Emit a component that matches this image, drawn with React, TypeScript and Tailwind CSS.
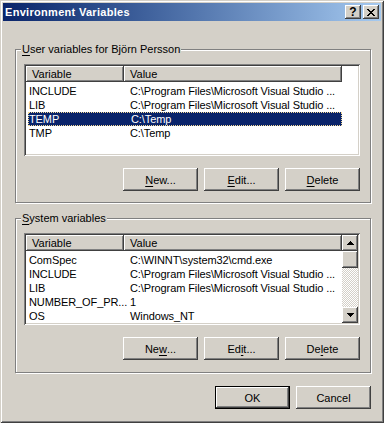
import React from 'react';

const raised =
  'shadow-[inset_-1px_-1px_#404040,inset_1px_1px_#ffffff,inset_-2px_-2px_#808080,inset_2px_2px_#d4d0c8]';
const headerCell =
  'h-full flex items-center shadow-[inset_-1px_-1px_#404040,inset_1px_1px_#ffffff,inset_-2px_-2px_#808080]';

type Row = { name: string; value: string; selected?: boolean };

const userVars: Row[] = [
  { name: 'INCLUDE', value: 'C:\\Program Files\\Microsoft Visual Studio ...' },
  { name: 'LIB', value: 'C:\\Program Files\\Microsoft Visual Studio ...' },
  { name: 'TEMP', value: 'C:\\Temp', selected: true },
  { name: 'TMP', value: 'C:\\Temp' },
];

const systemVars: Row[] = [
  { name: 'ComSpec', value: 'C:\\WINNT\\system32\\cmd.exe' },
  { name: 'INCLUDE', value: 'C:\\Program Files\\Microsoft Visual Studio ...' },
  { name: 'LIB', value: 'C:\\Program Files\\Microsoft Visual Studio ...' },
  { name: 'NUMBER_OF_PR...', value: '1' },
  { name: 'OS', value: 'Windows_NT' },
];

function Key({ children }: { children: React.ReactNode }) {
  return <span className="underline underline-offset-[2px]">{children}</span>;
}

function Button({ children, isDefault }: { children: React.ReactNode; isDefault?: boolean }) {
  return (
    <div className={`w-[75px] h-[23px] ${isDefault ? 'border border-black' : ''}`}>
      <div className={`w-full h-full flex items-center justify-center ${raised}`}>{children}</div>
    </div>
  );
}

function ListHeader() {
  return (
    <div className="h-[16px] flex bg-[#d4d0c8]">
      <div className={`w-[98px] pl-[6px] ${headerCell}`}>Variable</div>
      <div className={`w-[218px] pl-[6px] ${headerCell}`}>Value</div>
    </div>
  );
}

function ListRows({ rows }: { rows: Row[] }) {
  return (
    <div className="pt-[2px] tracking-[-0.1px]">
      {rows.map((r) => (
        <div
          key={r.name}
          className={`ml-[2px] w-[314px] h-[14px] flex items-center ${
            r.selected ? 'bg-[#0a246a] text-white border border-dotted border-[#f5db95]' : ''
          }`}
        >
          <div className={`w-[96px] whitespace-nowrap ${r.selected ? 'pl-0' : 'pl-[1px]'}`}>{r.name}</div>
          <div className="pl-[6px] whitespace-nowrap">{r.value}</div>
        </div>
      ))}
    </div>
  );
}

function Arrow({ up }: { up?: boolean }) {
  return (
    <svg width="7" height="4" viewBox="0 0 7 4" shapeRendering="crispEdges">
      <polygon points={up ? '3.5,0 7,4 0,4' : '0,0 7,0 3.5,4'} fill="#000" />
    </svg>
  );
}

function Scrollbar() {
  return (
    <div className="w-[16px] h-full flex flex-col">
      <div className={`h-[16px] flex items-center justify-center bg-[#d4d0c8] ${raised}`}>
        <Arrow up />
      </div>
      <div className={`h-[17px] bg-[#d4d0c8] ${raised}`} />
      <div className="flex-1 bg-[repeating-conic-gradient(#d4d0c8_0_25%,#ffffff_0_50%)] bg-size-[2px_2px]" />
      <div className={`h-[16px] flex items-center justify-center bg-[#d4d0c8] ${raised}`}>
        <Arrow />
      </div>
    </div>
  );
}

function GroupBox({
  label,
  height,
  children,
}: {
  label: React.ReactNode;
  height: string;
  children: React.ReactNode;
}) {
  return (
    <div
      className={`relative w-[356px] ${height} border border-[#808080] shadow-[inset_1px_1px_#ffffff,1px_1px_#ffffff] pl-[8px] pt-[14px] pr-[10px] flex flex-col`}
    >
      <span className="absolute left-[5px] -top-[8px] px-[1px] bg-[#d4d0c8] leading-[14px] whitespace-nowrap">
        {label}
      </span>
      {children}
    </div>
  );
}

function ButtonRow({ keys }: { keys: [React.ReactNode, React.ReactNode, React.ReactNode] }) {
  return (
    <div className="mt-[12px] flex justify-end gap-[6px]">
      <Button>{keys[0]}</Button>
      <Button>{keys[1]}</Button>
      <Button>{keys[2]}</Button>
    </div>
  );
}

const sunken =
  'shadow-[inset_1px_1px_#808080,inset_-1px_-1px_#ffffff,inset_2px_2px_#404040,inset_-2px_-2px_#d4d0c8]';

export default function App() {
  return (
    <div className="w-[384px] h-[423px] bg-[#d4d0c8] p-[3px] flex flex-col text-[11px] leading-[14px] text-black font-['Liberation_Sans',Arial,sans-serif] shadow-[inset_1px_1px_#d4d0c8,inset_-1px_-1px_#404040,inset_2px_2px_#ffffff,inset_-2px_-2px_#808080] overflow-hidden">
      {/* title bar */}
      <div className="h-[18px] flex items-center bg-linear-to-r from-[#0a246a] to-[#a6caf0] pl-[2px] pr-[2px]">
        <span className="flex-1 text-white font-bold tracking-[0.3px]">Environment Variables</span>
        <div className="flex gap-[2px]">
          <div className={`w-[16px] h-[14px] flex items-center justify-center bg-[#d4d0c8] font-bold text-[12px] leading-none ${raised}`}>
            ?
          </div>
          <div className={`w-[16px] h-[14px] flex items-center justify-center bg-[#d4d0c8] ${raised}`}>
            <svg width="8" height="7" viewBox="0 0 8 7" shapeRendering="crispEdges">
              <path
                d="M0 0h2v1H0zM6 0h2v1H6zM1 1h2v1H1zM5 1h2v1H5zM2 2h2v1H2zM4 2h2v1H4zM3 3h2v1H3zM2 4h2v1H2zM4 4h2v1H4zM1 5h2v1H1zM5 5h2v1H5zM0 6h2v1H0zM6 6h2v1H6z"
                fill="#000"
              />
            </svg>
          </div>
        </div>
      </div>

      <div className="pl-[12px] pt-[28px] flex flex-col">
        <GroupBox
          height="h-[154px]"
          label={
            <>
              <Key>U</Key>ser variables for Björn Persson
            </>
          }
        >
          <div className={`w-[336px] h-[92px] p-[2px] bg-white ${sunken}`}>
            <div className="h-full bg-white">
              <div className="flex">
                <div className="w-[316px]">
                  <ListHeader />
                </div>
                <div className={`w-[16px] h-[16px] ${headerCell}`} />
              </div>
              <ListRows rows={userVars} />
            </div>
          </div>
          <ButtonRow
            keys={[
              <>
                <Key>N</Key>ew...
              </>,
              <>
                <Key>E</Key>dit...
              </>,
              <>
                <Key>D</Key>elete
              </>,
            ]}
          />
        </GroupBox>

        <div className="mt-[15px]">
          <GroupBox
            height="h-[155px]"
            label={
              <>
                <Key>S</Key>ystem variables
              </>
            }
          >
            <div className={`w-[336px] h-[92px] p-[2px] bg-white ${sunken}`}>
              <div className="h-full flex bg-white">
                <div className="w-[316px]">
                  <ListHeader />
                  <ListRows rows={systemVars} />
                </div>
                <Scrollbar />
              </div>
            </div>
            <ButtonRow
              keys={[
                <>
                  Ne<Key>w</Key>...
                </>,
                <>
                  Ed<Key>i</Key>t...
                </>,
                <>
                  De<Key>l</Key>ete
                </>,
              ]}
            />
          </GroupBox>
        </div>

        <div className="mt-[13px] w-[356px] flex justify-end gap-[6px]">
          <Button isDefault>OK</Button>
          <Button>Cancel</Button>
        </div>
      </div>
    </div>
  );
}
